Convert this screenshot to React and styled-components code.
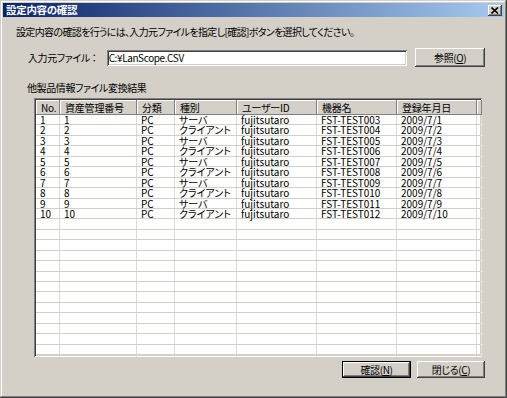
import React from 'react';
import styled, { createGlobalStyle } from 'styled-components';

const GlobalStyle = createGlobalStyle`
  html, body {
    margin: 0;
    padding: 0;
    background: #d4d0c8;
  }
  body {
    font-family: "Noto Sans CJK JP", "Noto Sans", sans-serif;
    font-size: 10.5px;
    color: #000;
    font-feature-settings: "palt";
  }
`;

const Window = styled.div`
  width: 507px;
  height: 398px;
  box-sizing: border-box;
  padding: 3px;
  background: #d4d0c8;
  box-shadow: inset -1px -1px #404040, inset 1px 1px #d4d0c8,
    inset -2px -2px #808080, inset 2px 2px #ffffff;
  display: flex;
  flex-direction: column;
`;

const TitleBar = styled.div`
  height: 14px;
  display: flex;
  align-items: center;
  justify-content: space-between;
  padding: 0 2px 0 3px;
  background: linear-gradient(to right, #0a246a, #a6caf0);
`;

const Title = styled.span`
  color: #fff;
  font-weight: bold;
  font-size: 10.5px;
  line-height: 14px;
  letter-spacing: -0.3px;
`;

const CloseButton = styled.div`
  width: 14px;
  height: 11px;
  background: #d4d0c8;
  box-shadow: inset -1px -1px #404040, inset 1px 1px #ffffff,
    inset -2px -2px #808080;
  display: flex;
  align-items: center;
  justify-content: center;
`;

const Body = styled.div`
  flex: 1;
  display: flex;
  flex-direction: column;
  padding: 8px 19px 0 13px;
`;

const Instruction = styled.div`
  font-size: 10px;
  line-height: 14px;
  letter-spacing: -0.65px;
  white-space: nowrap;
`;

const FileRow = styled.div`
  display: flex;
  align-items: center;
  height: 19px;
  margin-top: 9px;
  padding-left: 12px;
`;

const Label = styled.span`
  width: 79px;
  font-size: 10px;
  line-height: 14px;
  white-space: nowrap;
  letter-spacing: -0.4px;
`;

const TextBox = styled.div`
  width: 302px;
  height: 16px;
  box-sizing: border-box;
  background: #fff;
  padding: 0 2px;
  font-size: 10px;
  line-height: 16px;
  box-shadow: inset 1px 1px #808080, inset -1px -1px #ffffff,
    inset 2px 2px #404040, inset -2px -2px #d4d0c8;
  letter-spacing: -0.4px;
`;

const Button = styled.div`
  width: ${(p) => p.$w}px;
  height: ${(p) => p.$h || 17}px;
  margin-left: ${(p) => p.$ml || 0}px;
  box-sizing: border-box;
  background: #d4d0c8;
  display: flex;
  align-items: center;
  justify-content: center;
  font-size: 10px;
  line-height: 14px;
  letter-spacing: -0.4px;
  box-shadow: ${(p) =>
    p.$default
      ? 'inset 0 0 0 1px #000, inset -2px -2px #404040, inset 2px 2px #ffffff, inset -3px -3px #808080'
      : 'inset -1px -1px #404040, inset 1px 1px #ffffff, inset -2px -2px #808080'};
  u {
    text-decoration: underline;
    text-underline-offset: 1px;
  }
`;

const SectionLabel = styled.div`
  margin-top: 14px;
  margin-left: 11px;
  font-size: 10px;
  line-height: 14px;
  letter-spacing: -0.4px;
`;

const ListView = styled.div`
  margin-top: 3px;
  margin-left: 18px;
  width: 448px;
  height: 259px;
  box-sizing: border-box;
  padding: 2px;
  background: #fff;
  box-shadow: inset 1px 1px #808080, inset -1px -1px #ffffff,
    inset 2px 2px #404040, inset -2px -2px #d4d0c8;
  overflow: hidden;
  display: flex;
  flex-direction: column;
`;

const HeaderRow = styled.div`
  display: flex;
  height: 15px;
  flex: none;
`;

const HeaderCell = styled.div`
  width: ${(p) => p.$w}px;
  flex: ${(p) => (p.$fill ? '1' : 'none')};
  box-sizing: border-box;
  padding-left: 5px;
  font-size: 10px;
  line-height: 15px;
  background: #d4d0c8;
  box-shadow: inset -1px -1px #808080, inset 1px 1px #ffffff;
  white-space: nowrap;
  letter-spacing: -0.2px;
`;

const Row = styled.div`
  display: flex;
  height: 10.45px;
  flex: none;
  box-sizing: border-box;
  border-bottom: 1px solid #d4d0c8;
`;

const Cell = styled.div`
  width: ${(p) => p.$w}px;
  flex: ${(p) => (p.$fill ? '1' : 'none')};
  box-sizing: border-box;
  padding-left: 4px;
  border-right: 1px solid #dedbd6;
  font-size: 10px;
  line-height: 10px;
  white-space: nowrap;
`;

const Footer = styled.div`
  display: flex;
  justify-content: flex-end;
  margin-top: 4px;
`;

const columns = [
  { label: 'No.', w: 24 },
  { label: '資産管理番号', w: 77 },
  { label: '分類', w: 38 },
  { label: '種別', w: 62 },
  { label: 'ユーザーID', w: 80 },
  { label: '機器名', w: 80 },
  { label: '登録年月日', w: 80 },
];

const rows = Array.from({ length: 10 }, (_, i) => {
  const n = i + 1;
  return [
    String(n),
    String(n),
    'PC',
    n % 2 ? 'サーバ' : 'クライアント',
    'fujitsutaro',
    `FST-TEST${String(n + 2).padStart(3, '0')}`,
    `2009/7/${n}`,
  ];
});

const TOTAL_ROWS = 24;

export default function App() {
  const lines = Array.from({ length: TOTAL_ROWS }, (_, i) => rows[i] || null);
  return (
    <>
      <GlobalStyle />
      <Window>
        <TitleBar>
          <Title>設定内容の確認</Title>
          <CloseButton>
            <svg width="8" height="7" viewBox="0 0 8 7">
              <path d="M0.5 0.5 L7 6.5 M7 0.5 L0.5 6.5" stroke="#000" strokeWidth="1.6" />
            </svg>
          </CloseButton>
        </TitleBar>
        <Body>
          <Instruction>
            設定内容の確認を行うには、入力元ファイルを指定し[確認]ボタンを選択してください。
          </Instruction>
          <FileRow>
            <Label>入力元ファイル ：</Label>
            <TextBox>C:¥LanScope.CSV</TextBox>
            <Button $w={70} $h={19} $ml={8}>
              参照(<u>O</u>)
            </Button>
          </FileRow>
          <SectionLabel>他製品情報ファイル変換結果</SectionLabel>
          <ListView>
            <HeaderRow>
              {columns.map((c) => (
                <HeaderCell key={c.label} $w={c.w}>
                  {c.label}
                </HeaderCell>
              ))}
              <HeaderCell $fill />
            </HeaderRow>
            {lines.map((r, i) => (
              <Row key={i}>
                {columns.map((c, j) => (
                  <Cell key={c.label} $w={c.w}>
                    {r ? r[j] : ''}
                  </Cell>
                ))}
                <Cell $fill />
              </Row>
            ))}
          </ListView>
          <Footer>
            <Button $w={69} $default>
              確認(<u>N</u>)
            </Button>
            <Button $w={68} $ml={6}>
              閉じる(<u>C</u>)
            </Button>
          </Footer>
        </Body>
      </Window>
    </>
  );
}
